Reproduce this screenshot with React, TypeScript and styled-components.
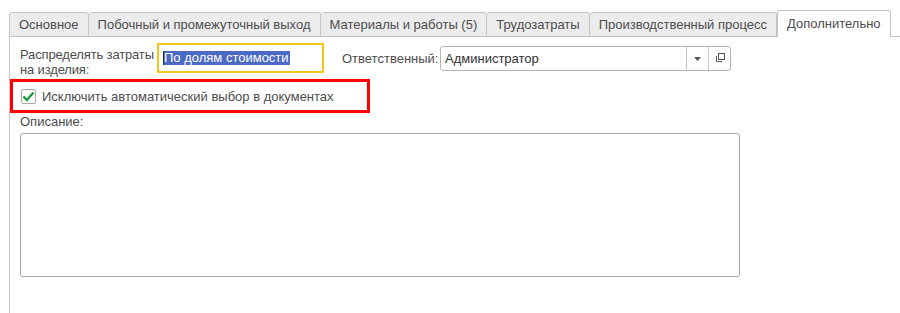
import styled, { createGlobalStyle } from "styled-components";

const GlobalStyle = createGlobalStyle`
  html, body {
    margin: 0;
    padding: 0;
    background: #fff;
  }
  body {
    font-family: "Liberation Sans", Arial, sans-serif;
    font-size: 13px;
    color: #4d4d4d;
  }
`;

const StyledPage = styled.div`
  width: 900px;
  height: 313px;
  padding: 10px 0 0 9px;
  box-sizing: border-box;
  display: flex;
  flex-direction: column;
  overflow: hidden;
`;

const StyledTabBar = styled.div`
  display: flex;
  align-items: flex-end;
  height: 27px;
  flex-shrink: 0;
`;

const StyledTab = styled.div<{ $active?: boolean }>`
  height: ${(p) => (p.$active ? "27px" : "25px")};
  box-sizing: border-box;
  padding: 0 9px;
  display: flex;
  align-items: center;
  border: 1px solid #c4c4c4;
  border-bottom: ${(p) => (p.$active ? "none" : "1px solid #c4c4c4")};
  border-left: ${(p) => (p.$active ? "1px solid #c4c4c4" : "none")};
  border-radius: 3px 3px 0 0;
  background: ${(p) => (p.$active ? "#fff" : "#ececec")};
  color: #4d4d4d;
  white-space: nowrap;
  padding-bottom: ${(p) => (p.$active ? "2px" : "0")};
  &:first-child {
    border-left: 1px solid #c4c4c4;
  }
`;

const StyledTabRest = styled.div`
  flex: 1;
  height: 1px;
  background: #c4c4c4;
`;

const StyledPanel = styled.div`
  flex: 1;
  border-left: 1px solid #c9c9c9;
  padding: 6px 0 0 10px;
  display: flex;
  flex-direction: column;
`;

const StyledRow = styled.div`
  display: flex;
  align-items: flex-start;
  height: 30px;
`;

const StyledLabel = styled.div`
  width: 137px;
  line-height: 15px;
  margin-top: 4px;
  white-space: nowrap;
  letter-spacing: -0.15px;
`;

const StyledFocusFrame = styled.div`
  width: 167px;
  height: 30px;
  box-sizing: border-box;
  border: 2px solid #f5c518;
  padding: 0 0 0 5px;
  display: flex;
  align-items: center;
`;

const StyledSelection = styled.span`
  background: #4c69c4;
  color: #fff;
  line-height: 14px;
  padding-right: 1px;
  border-left: 1px solid #2a2a2a;
  margin-left: -1px;
`;

const StyledInlineLabel = styled.div`
  margin-left: 18px;
  width: 98px;
  height: 30px;
  display: flex;
  align-items: center;
`;

const StyledCombo = styled.div`
  margin-top: 3px;
  width: 291px;
  height: 25px;
  box-sizing: border-box;
  border: 1px solid #b5b5b5;
  border-radius: 3px;
  display: flex;
  align-items: stretch;
`;

const StyledComboText = styled.div`
  flex: 1;
  padding-left: 4px;
  display: flex;
  align-items: center;
  color: #333;
`;

const StyledComboButton = styled.div`
  width: 21px;
  border-left: 1px solid #c4c4c4;
  display: flex;
  align-items: center;
  justify-content: center;
`;

const StyledHighlight = styled.div`
  margin: 6px 0 0 -10px;
  width: 360px;
  height: 34px;
  box-sizing: border-box;
  border: 3px solid #ff0000;
  padding-left: 8px;
  display: flex;
  align-items: center;
  gap: 6px;
`;

const StyledCheckbox = styled.div`
  width: 15px;
  height: 15px;
  box-sizing: border-box;
  border: 1px solid #a9a9a9;
  border-radius: 2px;
  background: #fff;
  display: flex;
  align-items: center;
  justify-content: center;
`;

const StyledCaption = styled.div`
  margin-top: 1px;
  line-height: 15px;
`;

const StyledMemo = styled.textarea`
  margin-top: 4px;
  width: 720px;
  height: 144px;
  box-sizing: border-box;
  border: 1px solid #a6a6a6;
  border-radius: 3px;
  resize: none;
  outline: none;
  font: inherit;
`;

const tabs = [
	"Основное",
	"Побочный и промежуточный выход",
	"Материалы и работы (5)",
	"Трудозатраты",
	"Производственный процесс",
	"Дополнительно",
];

const App = () => {
	return (
		<>
			<GlobalStyle />
			<StyledPage>
				<StyledTabBar>
					{tabs.map((t, i) => (
						<StyledTab key={t} $active={i === tabs.length - 1}>
							{t}
						</StyledTab>
					))}
					<StyledTabRest />
				</StyledTabBar>

				<StyledPanel>
					<StyledRow>
						<StyledLabel>
							Распределять затраты
							<br />
							на изделия:
						</StyledLabel>
						<StyledFocusFrame>
							<StyledSelection>По долям стоимости</StyledSelection>
						</StyledFocusFrame>
						<StyledInlineLabel>Ответственный:</StyledInlineLabel>
						<StyledCombo>
							<StyledComboText>Администратор</StyledComboText>
							<StyledComboButton>
								<svg width="7" height="4" viewBox="0 0 7 4">
									<path d="M0 0 H7 L3.5 4 Z" fill="#555" />
								</svg>
							</StyledComboButton>
							<StyledComboButton>
								<svg width="11" height="11" viewBox="0 0 11 11">
									<rect x="4.5" y="0.5" width="6" height="6" fill="none" stroke="#555" />
									<path d="M2.5 3 V8.5 H8" fill="none" stroke="#555" />
								</svg>
							</StyledComboButton>
						</StyledCombo>
					</StyledRow>

					<StyledHighlight>
						<StyledCheckbox>
							<svg width="13" height="11" viewBox="0 0 13 11">
								<path
									d="M1.5 5.5 L4.8 9 L11.5 1.5"
									fill="none"
									stroke="#1f9a3a"
									strokeWidth="2.4"
								/>
							</svg>
						</StyledCheckbox>
						<span>Исключить автоматический выбор в документах</span>
					</StyledHighlight>

					<StyledCaption>Описание:</StyledCaption>
					<StyledMemo />
				</StyledPanel>
			</StyledPage>
		</>
	);
};

export default App;
